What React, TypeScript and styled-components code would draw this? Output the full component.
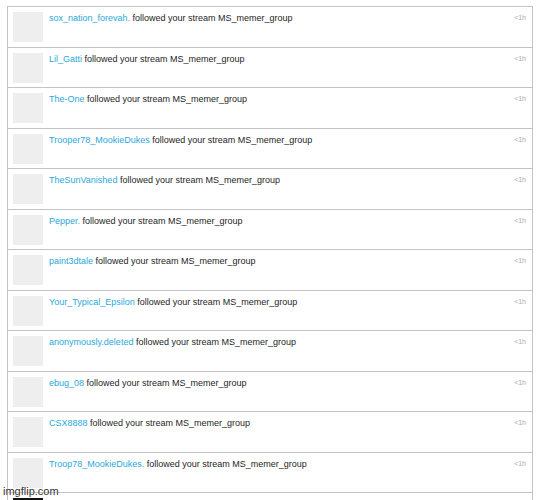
import styled, { createGlobalStyle } from "styled-components"

const GlobalStyle = createGlobalStyle`
  html, body {
    margin: 0;
    padding: 0;
    background: #fff;
    overflow: hidden;
  }
  body {
    font-family: "Liberation Sans", Arial, sans-serif;
  }
`

const Page = styled.div`
  position: relative;
  height: 500px;
  overflow: hidden;
  padding: 6px 0 0 7px;
  box-sizing: border-box;
`

const Feed = styled.ul`
  list-style: none;
  margin: 0;
  padding: 0;
  width: 524px;
  border: 1px solid #c4c4c4;
  border-bottom: 0;
`

const Row = styled.li`
  display: flex;
  align-items: flex-start;
  box-sizing: border-box;
  height: 40.5px;
  padding: 5px 6px 0 5px;
  border-bottom: 1px solid #c4c4c4;
`

const Avatar = styled.div<{ $dark?: boolean }>`
  flex: none;
  width: 30px;
  height: 30px;
  margin-right: 6px;
  background: ${props => props.$dark ? '#111' : '#eeeeee'};
`

const Message = styled.div`
  flex: 1;
  font-size: 9px;
  line-height: 12px;
  color: #1e1e1e;
`

const User = styled.a`
  color: #2aa8dc;
  text-decoration: none;
`

const Time = styled.span`
  flex: none;
  font-size: 7px;
  color: #aaa;
  padding-top: 2px;
`

const Watermark = styled.div`
  position: absolute;
  left: 3px;
  top: 485px;
  font-size: 11px;
  line-height: 13px;
  color: #333;
  text-shadow: 0 0 1px #fff;
`

const users = [
  'sox_nation_forevah.',
  'Lil_Gatti',
  'The-One',
  'Trooper78_MookieDukes',
  'TheSunVanished',
  'Pepper.',
  'paint3dtale',
  'Your_Typical_Epsilon',
  'anonymously.deleted',
  'ebug_08',
  'CSX8888',
  'Troop78_MookieDukes.',
  '',
]

export default function App() {
  return (
    <>
      <GlobalStyle />
      <Page>
        <Feed>
          {users.map((name, i) => (
            <Row key={i}>
              <Avatar $dark={name === ''} />
              <Message>
                {name && <><User href="#">{name}</User> followed your stream MS_memer_group</>}
              </Message>
              <Time>&lt;1h</Time>
            </Row>
          ))}
        </Feed>
        <Watermark>imgflip.com</Watermark>
      </Page>
    </>
  )
}
